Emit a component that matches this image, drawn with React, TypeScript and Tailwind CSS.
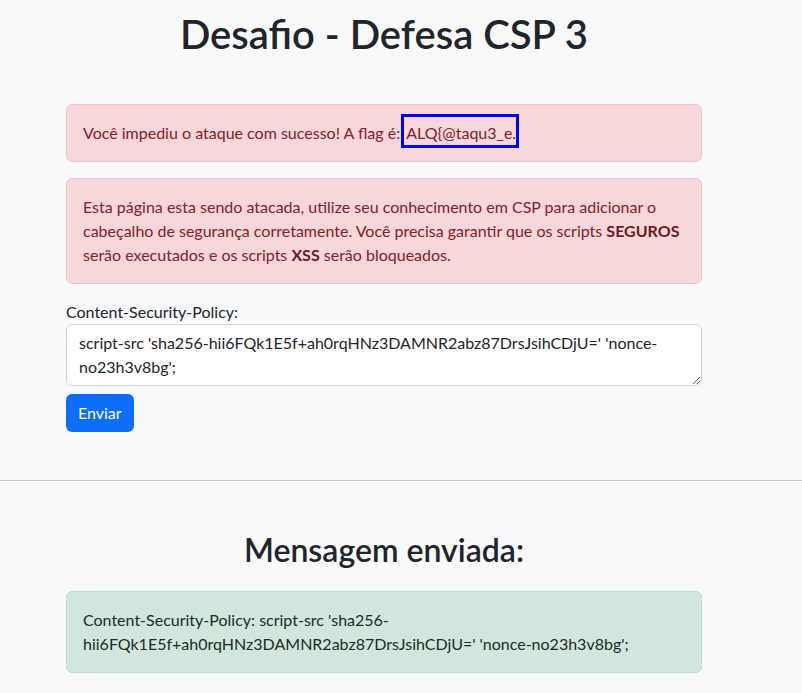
import React from 'react';

const csp = "script-src 'sha256-hii6FQk1E5f+ah0rqHNz3DAMNR2abz87DrsJsihCDjU=' 'nonce-no23h3v8bg';";

const App: React.FC = () => {
    return (
        <div className="min-h-screen bg-[#f8f9fa] text-[#212529] text-base leading-6 font-['Lato','Liberation_Sans',sans-serif]">
            <main className="ml-[66px] w-[636px] pt-[10px] pb-12">
                <h1 className="text-center text-[40px] font-semibold leading-[1.2] mb-[46px]">Desafio - Defesa CSP 3</h1>

                <div className="mb-4 rounded-md border border-[#f5c2c7] bg-[#f8d7da] p-4 text-[#842029]">
                    Você impediu o ataque com sucesso! A flag é:
                    <span className="relative ml-[6px] inline-block leading-6">
                        ALQ{'{'}@taqu3_e.
                        <span className="absolute -left-[5px] -right-[3px] -top-[7px] -bottom-[3px] border-[3px] border-[#0000ff]" />
                    </span>
                </div>

                <div className="mb-4 rounded-md border border-[#f5c2c7] bg-[#f8d7da] p-4 text-[#842029]">
                    Esta página esta sendo atacada, utilize seu conhecimento em CSP para adicionar o<br />
                    cabeçalho de segurança corretamente. Você precisa garantir que os scripts <strong className="text-[#6a1a21]">SEGUROS</strong><br />
                    serão executados e os scripts <strong className="text-[#6a1a21]">XSS</strong> serão bloqueados.
                </div>

                <form onSubmit={(e) => e.preventDefault()}>
                    <label htmlFor="csp" className="block">Content-Security-Policy:</label>
                    <textarea
                        id="csp"
                        rows={2}
                        defaultValue={csp}
                        className="block h-[62px] w-full rounded-md border border-[#ced4da] bg-white px-3 py-1.5 leading-6 text-[#212529]"
                    />
                    <button type="submit" className="mt-2 h-[38px] rounded-md bg-[#0d6efd] px-3 text-white">Enviar</button>
                </form>
            </main>

            <hr className="border-t border-[#c8c9ca]" />

            <section className="ml-[66px] w-[636px] pt-[50px] pb-5">
                <h2 className="text-center text-[32px] font-semibold leading-[1.2] mb-[22px]">Mensagem enviada:</h2>
                <div className="rounded-md border border-[#badbcc] bg-[#d1e7dd] p-4 text-[#1c2b24]">
                    Content-Security-Policy: script-src 'sha256-<br />
                    hii6FQk1E5f+ah0rqHNz3DAMNR2abz87DrsJsihCDjU=' 'nonce-no23h3v8bg';
                </div>
            </section>
        </div>
    );
};

export default App;
